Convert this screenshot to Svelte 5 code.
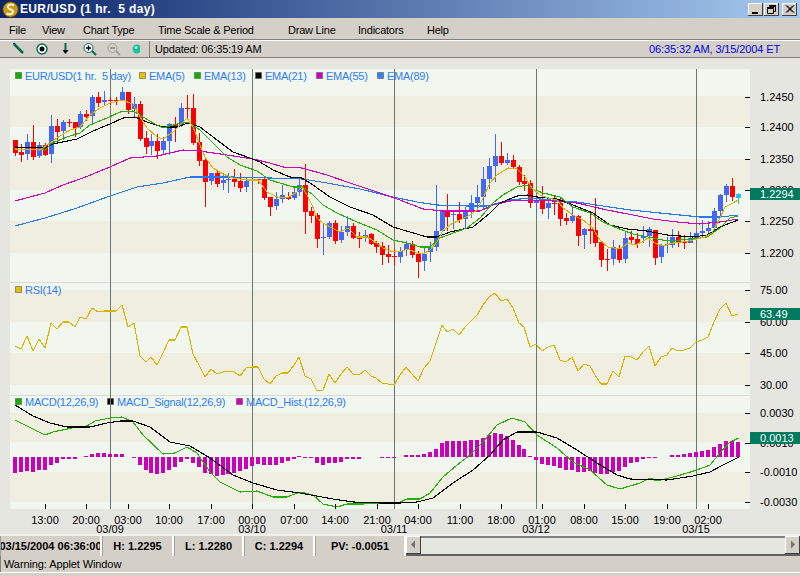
<script>
	// x position of a bar by its index, 123 one-hour bars
	const barX = (i) => Math.round(15.3 + 5.92 * i);

	// [kind, bodyTop, bodyBottom, high, low] in page pixels. r = down, b = up, c = live bar
	const candles = [
		['r',140,153,140,156],['r',152,155,144,162],['b',142,154,134,160],['r',142,157,125,160],['b',145,156,142,158],
		['r',145,155,143,156],['b',126,154,115,163],['r',126,132,119,142],['b',122,131,120,140],['r',122,123,119,127],
		['r',122,128,122,137],['b',114,127,111,129],['r',114,117,110,121],['b',97,116,95,125],['r',97,103,92,107],
		['b',100,102,91,106],['r',100,101,97,105],['r',100,101,97,105],['b',92,100,87,100],['r',92,110,92,114],
		['b',104,109,97,117],['r',104,139,101,141],['r',138,147,131,154],['b',141,146,134,155],['r',141,151,134,159],
		['b',141,150,137,155],['b',124,141,123,155],['r',124,127,117,142],['b',108,125,103,127],['r',108,109,95,120],
		['r',108,143,94,145],['r',142,161,133,166],['r',160,182,159,207],['b',173,181,173,185],['r',173,184,171,187],
		['b',180,183,173,190],['b',179,180,173,193],['r',179,182,169,187],['r',181,188,173,192],['b',181,187,177,192],
		['b',180,181,177,184],['r',179,180,179,184],['r',179,198,178,200],['r',197,207,197,216],['b',199,206,192,210],
		['b',195,199,185,203],['r',197,199,192,200],['b',192,198,186,200],['b',185,192,179,196],['r',185,212,164,234],
		['r',211,216,207,223],['r',215,239,213,248],['b',237,238,223,255],['b',223,237,221,239],['r',223,241,220,244],
		['b',232,240,226,243],['b',226,232,216,236],['r',226,238,223,239],['r',237,239,232,248],['b',235,238,230,242],
		['r',234,244,233,245],['r',243,247,241,253],['r',246,255,242,265],['r',254,257,245,263],['r',256,257,249,266],
		['b',251,257,247,263],['b',244,250,241,256],['r',244,255,241,258],['r',254,262,251,278],['b',254,261,247,271],
		['b',247,252,242,262],['b',231,247,185,251],['b',211,231,210,231],['r',211,217,194,231],['b',214,215,210,229],
		['r',214,220,202,223],['b',210,219,207,228],['b',203,210,195,218],['b',197,203,185,210],['b',179,197,167,210],
		['b',166,179,158,189],['b',156,166,134,182],['r',156,163,142,165],['b',160,163,153,165],['r',160,167,155,169],
		['r',167,182,165,185],['r',181,184,175,191],['r',183,203,180,208],['b',200,203,197,211],['r',200,209,186,214],
		['b',203,208,197,219],['r',203,204,196,215],['r',203,219,198,226],['r',218,221,213,225],['b',216,221,206,223],
		['r',216,236,215,246],['b',229,235,228,249],['r',229,231,211,244],['r',230,243,198,247],['r',242,260,241,267],
		['r',259,260,249,271],['b',247,259,240,265],['r',248,260,245,263],['b',238,259,232,263],['r',237,240,231,243],
		['r',239,244,233,248],['b',236,238,226,243],['b',229,236,227,247],['r',230,258,230,265],['b',245,257,244,263],
		['b',244,245,237,253],['b',237,245,229,248],['r',237,243,231,247],['r',242,243,235,249],['b',238,243,232,243],
		['b',233,239,231,242],['b',231,233,220,237],['b',228,231,221,236],['b',211,228,208,230],['b',195,211,194,217],
		['b',186,195,184,202],['r',186,197,178,201],['c',194,198,193,204]
	];

	const ema5 = '15,149 40,150 50,143 57,138 70,130 80,127 90,115 100,108 110,103 122,100 133,104 140,117 147,128 157,137 163,139 173,132 182,123 187,118 193,127 200,145 205,157 213,168 223,174 233,178 247,180 258,180 262,185 267,192 277,197 287,198 297,192 302,187 307,195 312,205 317,218 323,223 332,228 340,232 348,228 357,237 367,237 377,243 383,248 393,252 402,251 408,249 417,253 423,254 430,250 437,242 443,230 453,223 460,220 470,215 477,210 483,198 490,183 497,175 508,168 517,169 525,177 532,188 540,195 548,198 557,200 563,208 573,215 583,220 592,227 600,240 608,247 620,249 628,243 635,245 642,242 648,238 655,243 663,246 673,243 683,242 693,240 705,237 712,233 720,218 725,207 733,203 738,200';
	const ema13 = '15,149 45,150 52,143 67,137 80,133 90,125 107,118 120,112 133,111 140,115 153,123 163,128 177,124 188,122 200,130 213,143 227,157 240,165 257,171 270,180 280,183 293,187 303,187 313,195 323,205 337,213 357,222 377,230 393,240 407,243 420,247 430,247 440,238 453,233 467,228 480,218 493,203 503,195 517,187 527,185 530,188 543,193 560,197 573,207 590,213 603,222 617,228 633,234 653,238 667,241 693,239 707,237 720,228 730,218 738,216';
	const ema21 = '15,147 45,148 53,144 77,139 93,131 110,124 123,118 135,117 147,122 163,127 177,127 188,123 200,127 217,140 233,152 250,158 260,162 273,170 290,177 302,178 313,185 330,197 350,207 373,215 393,227 410,232 427,237 437,237 450,232 473,227 490,213 500,203 517,196 528,195 537,197 557,199 573,205 593,213 610,225 627,229 647,231 667,235 693,237 707,235 720,227 738,220';
	const ema55 = '15,201 45,193 63,185 83,178 110,167 130,158 157,156 183,150 200,151 227,155 253,159 270,163 283,167 302,168 327,175 350,183 380,193 400,200 423,209 443,211 480,211 493,205 510,201 530,200 553,201 577,203 607,210 633,215 653,219 677,222 700,224 720,222 738,219';
	const ema89 = '15,226 45,218 77,208 107,197 137,187 163,183 190,177 233,177 270,178 303,179 327,183 360,189 393,197 417,202 437,205 467,206 487,206 510,200 530,198 550,200 577,202 603,206 630,210 660,213 700,217 720,217 738,215';
	const macdLine = '15,420 33,429 45,435 53,432 77,427 87,426 95,421 110,418 122,417 133,422 143,435 163,454 175,453 187,447 197,453 210,472 220,482 240,492 257,491 273,497 287,497 300,492 313,495 323,504 337,507 347,504 363,504 377,503 387,504 400,502 407,499 420,499 430,493 443,477 457,465 470,455 483,442 497,425 512,418 525,422 537,435 557,448 573,462 590,470 607,485 620,489 640,483 650,478 657,481 677,476 697,470 710,465 720,453 730,442 739,438';
	const macdSignal = '15,405 33,416 50,423 67,427 90,427 107,423 120,421 133,421 150,427 170,442 190,446 210,458 233,475 253,483 277,490 300,493 333,499 353,502 380,503 400,503 417,502 433,498 453,483 473,470 490,455 503,440 517,432 537,432 557,438 577,450 597,463 617,475 630,479 667,480 693,476 710,472 723,465 739,457';

	// one value per bar
	const rsi = [346,349,336,351,339,348,323,329,322,322,327,317,319,308,312,311,311,311,305,327,323,356,362,357,365,353,340,340,327,327,354,365,377,369,374,372,371,372,376,368,367,367,379,384,376,373,373,365,357,376,379,391,390,374,383,374,367,374,375,370,376,378,383,384,385,375,367,374,381,368,361,343,325,332,329,335,327,321,315,305,297,293,301,299,308,323,327,347,344,351,347,345,360,362,357,371,364,366,375,384,384,371,377,356,357,360,352,346,366,357,355,348,351,350,348,342,340,337,322,309,303,316,314];
	const rsiPoints = rsi.map((y, i) => `${barX(i)},${y}`).join(' ');

	// histogram bars, pixels from the zero line (positive = below)
	const histZero = 457;
	const hist = [16,15,14,15,13,13,8,6,2,2,2,0,-1,-3,-4,-4,-3,-3,-3,0,1,8,13,16,17,16,13,10,5,2,6,10,16,17,19,18,17,16,14,12,9,7,8,8,8,6,4,2,-1,1,1,6,8,6,6,5,2,2,2,0,0,0,1,1,1,0,-2,-2,-2,-3,-5,-8,-14,-16,-16,-16,-16,-17,-17,-19,-22,-24,-23,-21,-17,-12,-8,-1,3,7,8,9,11,13,13,15,15,14,16,17,17,15,14,10,6,5,2,1,1,0,0,-2,-2,-3,-4,-5,-6,-7,-10,-13,-16,-16,-15];

	const bands = [
		[69,27,'l'],[96,31,'d'],[127,32,'l'],[159,31,'d'],[190,31,'l'],[221,32,'d'],[253,29,'l'],
		[283,7,'l'],[290,32,'d'],[322,31,'l'],[353,32,'d'],[385,10,'l'],
		[396,17,'l'],[413,29,'d'],[442,30,'l'],[472,30,'d'],[502,7,'l']
	];
	const separators = [282, 395];
	const dayLines = [110, 252, 394, 536, 696];
	const times = [[45,'13:00'],[86,'20:00'],[128,'03:00'],[169,'10:00'],[211,'17:00'],[252,'00:00'],[294,'07:00'],[335,'14:00'],[377,'21:00'],[418,'04:00'],[460,'11:00'],[501,'18:00'],[542,'01:00'],[584,'08:00'],[625,'15:00'],[667,'19:00'],[708,'02:00']];
	const dates = [[110,'03/09'],[252,'03/10'],[394,'03/11'],[536,'03/12'],[696,'03/15']];
	const yLabels = [
		[97,'1.2450'],[127,'1.2400'],[159,'1.2350'],[190,'1.2300'],[221,'1.2250'],[253,'1.2200'],
		[290,'75.00'],[322,'60.00'],[353,'45.00'],[385,'30.00'],
		[413,'0.0030'],[443,'0.0010'],[472,'-0.0010'],[502,'-0.0030']
	];
	const tags = [[188,'1.2294'],[308,'63.49'],[432,'0.0013']];
	const legend = [
		[15,72,'#10b000','EUR/USD(1 hr.  5 day)'],[139,72,'#e0c000','EMA(5)'],[194,72,'#10b000','EMA(13)'],[255,72,'#000000','EMA(21)'],[316,72,'#d000c0','EMA(55)'],[377,72,'#3080f0','EMA(89)'],
		[15,286,'#e0c000','RSI(14)'],
		[15,398,'#10b000','MACD(12,26,9)'],[107,398,'#000000','MACD_Signal(12,26,9)'],[236,398,'#d000c0','MACD_Hist.(12,26,9)']
	];
	const menu = ['File', 'View', 'Chart Type', 'Time Scale & Period', 'Draw Line', 'Indicators', 'Help'];
	const readouts = ['03/15/2004 06:36:00', 'H: 1.2295', 'L: 1.2280', 'C: 1.2294', 'PV: -0.0051'];
</script>

<div class="window">
	<div class="titlebar">
		<svg class="logo" width="17" height="17" viewBox="0 0 17 17">
			<circle cx="8.5" cy="8.5" r="7.8" fill="#c89a20" stroke="#4a3810" />
			<path d="M12 4.5 C9 2.5 5 4 6 6.5 C7 9 11 8 11 10.5 C11 13 7.5 14 4.5 12.5" fill="none" stroke="#fff6d0" stroke-width="2" />
		</svg>
		<span class="title">EUR/USD (1 hr.&nbsp; 5 day)</span>
		<div class="winbuttons">
			<button class="winbtn"><svg width="15" height="13" viewBox="0 0 15 13"><rect x="4" y="9" width="6" height="2" fill="#000" /></svg></button>
			<button class="winbtn"><svg width="15" height="13" viewBox="0 0 15 13"><path d="M5.5 3.5h6v5h-2M5 2.5h7M3.5 5.5h6v5h-6zM3 4.5h7" fill="none" stroke="#000" /></svg></button>
			<button class="winbtn close"><svg width="15" height="13" viewBox="0 0 15 13"><path d="M4 2.5l7 7M5 2.5l7 7M11 2.5l-7 7M12 2.5l-7 7" fill="none" stroke="#000" /></svg></button>
		</div>
	</div>

	<nav class="menu">
		{#each menu as item}
			<span>{item}</span>
		{/each}
	</nav>

	<div class="toolbar">
		<div class="tools">
			<svg width="140" height="16" viewBox="0 0 140 16">
				<path d="M14 3l9 9" stroke="#006a50" stroke-width="2.5" />
				<path d="M13 3l2-1" stroke="#000" />
				<circle cx="42" cy="8" r="5" fill="#fff" stroke="#006a50" stroke-width="1.4" />
				<circle cx="42" cy="8" r="2.5" fill="#000" />
				<path d="M65.5 2v8" stroke="#006a50" stroke-width="2" />
				<path d="M62.5 9h6l-3 4z" fill="#000" />
				<circle cx="88.5" cy="7" r="4.5" fill="#fff" stroke="#006a50" />
				<path d="M86 7h5M88.5 4.5v5" stroke="#000" stroke-width="1.4" />
				<path d="M92 10l4 4" stroke="#006a50" stroke-width="2" />
				<circle cx="112.5" cy="7" r="4.5" fill="none" stroke="#a0a09a" />
				<path d="M110 7h5" stroke="#808080" stroke-width="1.4" />
				<path d="M116 10l4 4" stroke="#a0a09a" stroke-width="2" />
				<circle cx="137" cy="8" r="4.5" fill="#18c0a0" />
				<circle cx="136" cy="6.5" r="1.5" fill="#a0f0e0" />
			</svg>
		</div>
		<span class="updated">Updated: 06:35:19 AM</span>
		<span class="clock">06:35:32 AM, 3/15/2004 ET</span>
	</div>

	<svg class="chart" width="800" height="476" viewBox="0 58 800 476">
		{#each bands as [y, h, kind]}
			<rect x="10" {y} width="740" height={h} fill={kind === 'd' ? '#efeee0' : '#f1f7ef'} />
		{/each}
		{#each separators as y}
			<rect x="10" {y} width="740" height="1" fill="#d8dcd8" />
		{/each}

		{#each legend as [x, y, color, label]}
			<rect x={x + 0.5} y={y + 0.5} width="6" height="6" fill={color} stroke="#555" stroke-opacity="0.55" />
			<text class="legend" x={x + 10} y={y + 7.5} xml:space="preserve">{label}</text>
		{/each}

		{#each dayLines as x}
			<rect {x} y="69" width="1" height="440" fill="#6c7672" />
		{/each}

		{#each candles as [kind, top, bottom, high, low], i}
			<rect class={kind} x={barX(i)} y={high} width="1" height={low - high} />
			<rect class={kind} x={barX(i) - 2} y={top} width="5" height={Math.max(bottom - top, 1)} />
		{/each}

		<polyline class="line" points={ema89} stroke="#2a78f0" />
		<polyline class="line" points={ema55} stroke="#cc00b8" />
		<polyline class="line" points={ema21} stroke="#000000" />
		<polyline class="line" points={ema13} stroke="#22b000" />
		<polyline class="line" points={ema5} stroke="#d8b400" />

		<polyline class="line" points={rsiPoints} stroke="#d8b400" />

		{#each hist as v, i}
			{#if v !== 0}
				<rect x={barX(i) - 2} y={v > 0 ? histZero : histZero + v} width="4" height={Math.abs(v)} fill="#cc00b8" />
			{/if}
		{/each}
		<polyline class="line" points={macdLine} stroke="#22b000" />
		<polyline class="line" points={macdSignal} stroke="#000000" />

		{#each yLabels as [y, label]}
			<rect x="745" {y} width="5" height="1" fill="#000" />
			<text class="axis" x="760" y={y + 4}>{label}</text>
		{/each}
		{#each tags as [y, label]}
			<rect x="750" {y} width="50" height="12" fill="#007a5e" />
			<text class="tag" x="760" y={y + 10}>{label}</text>
		{/each}

		{#each times as [x, label]}
			<rect {x} y="504" width="1" height="5" fill="#000" />
			<text class="axis mid" {x} y="523.5">{label}</text>
		{/each}
		{#each dates as [x, label]}
			<text class="axis mid" {x} y="532.5">{label}</text>
		{/each}
	</svg>

	<div class="status">
		{#each readouts as text}
			<div class="cell"><b>{text}</b></div>
		{/each}
		<div class="scrollbar">
			<div class="arrow"><svg width="15" height="17" viewBox="0 0 15 17"><path d="M9 4.5v8l-4-4z" fill="#707070" /></svg></div>
			<div class="track"></div>
			<div class="arrow"><svg width="15" height="17" viewBox="0 0 15 17"><path d="M6 4.5v8l4-4z" fill="#707070" /></svg></div>
		</div>
	</div>

	<div class="warning">Warning: Applet Window</div>
	<div class="tail"></div>
</div>

<style>
	:global(body) {
		margin: 0;
		background: #d4d0c8;
	}
	.window {
		width: 800px;
		height: 576px;
		overflow: hidden;
		display: flex;
		flex-direction: column;
		background: #d4d0c8;
		font-family: 'Liberation Sans', Arial, sans-serif;
		font-size: 11px;
		color: #000;
	}
	.titlebar {
		height: 18px;
		flex: none;
		display: flex;
		align-items: center;
		padding: 0 3px 0 2px;
		box-sizing: border-box;
		background: linear-gradient(90deg, #0a246a, #a6caf0);
	}
	.logo {
		flex: none;
	}
	.title {
		margin-left: 1px;
		color: #fff;
		font-weight: bold;
		font-size: 12px;
		letter-spacing: 0.35px;
		white-space: pre;
	}
	.winbuttons {
		margin-left: auto;
		display: flex;
		gap: 1px;
	}
	.winbtn {
		width: 15px;
		height: 13px;
		padding: 0;
		border: none;
		display: block;
		background: #d4d0c8;
		box-shadow: inset -1px -1px 0 #404040, inset 1px 1px 0 #fff;
	}
	.winbtn svg {
		display: block;
	}
	.close {
		margin-left: 2px;
	}
	.menu {
		height: 21px;
		flex: none;
		display: grid;
		grid-template-columns: 33px 41px 75px 130px 70px 69px auto;
		align-items: center;
		padding: 2px 0 0 9px;
		box-sizing: border-box;
		letter-spacing: -0.22px;
		font-size: 11px;
	}
	.toolbar {
		height: 19px;
		flex: none;
		display: flex;
		align-items: center;
		box-sizing: border-box;
		border-top: 1px solid #808080;
		box-shadow: inset 0 1px 0 #fff;
		border-bottom: 1px solid #808080;
	}
	.tools {
		width: 149px;
		height: 16px;
		flex: none;
		overflow: hidden;
		border-right: 1px solid #808080;
	}
	.tools svg {
		display: block;
	}
	.updated {
		margin-left: 5px;
		letter-spacing: -0.15px;
	}
	.clock {
		margin-left: auto;
		margin-right: 20px;
		color: #0000f0;
		letter-spacing: -0.12px;
	}
	.chart {
		display: block;
		flex: none;
		background: #e6e6e0;
	}
	.legend {
		font-size: 11px;
		fill: #2f7cf6;
		letter-spacing: -0.25px;
		white-space: pre;
	}
	.axis {
		font-size: 11px;
		fill: #000;
	}
	.mid {
		text-anchor: middle;
	}
	.tag {
		font-size: 11px;
		fill: #fff;
	}
	.line {
		fill: none;
		stroke-width: 1.1;
		shape-rendering: crispEdges;
	}
	.r {
		fill: #ff0000;
	}
	.b {
		fill: #4468f4;
	}
	.c {
		fill: #20c0f0;
	}
	.status {
		height: 22px;
		flex: none;
		display: grid;
		grid-template-columns: 102px 72px 70px 71px 91px 1fr;
		box-sizing: border-box;
		border-top: 2px solid #f4f2ec;
	}
	.cell {
		display: flex;
		align-items: center;
		justify-content: center;
		overflow: hidden;
		white-space: nowrap;
		box-sizing: border-box;
		font-size: 11px;
		border-left: 1px solid #a0a09a;
		border-right: 2px solid #fff;
	}
	.scrollbar {
		display: flex;
		border-bottom: 2px solid #606060;
		background: #e6e6e0;
	}
	.arrow {
		width: 15px;
		flex: none;
		background: #d4d0c8;
		box-shadow: inset -1px -1px 0 #404040, inset 1px 1px 0 #fff;
	}
	.arrow svg {
		display: block;
	}
	.track {
		flex: 1;
		border-top: 2px solid #808080;
	}
	.warning {
		height: 16px;
		flex: none;
		padding-left: 3px;
		line-height: 16px;
		border-left: 1px solid #808080;
		letter-spacing: -0.1px;
	}
	.tail {
		flex: none;
		height: 3px;
		border-top: 1px solid #fff;
	}
</style>
